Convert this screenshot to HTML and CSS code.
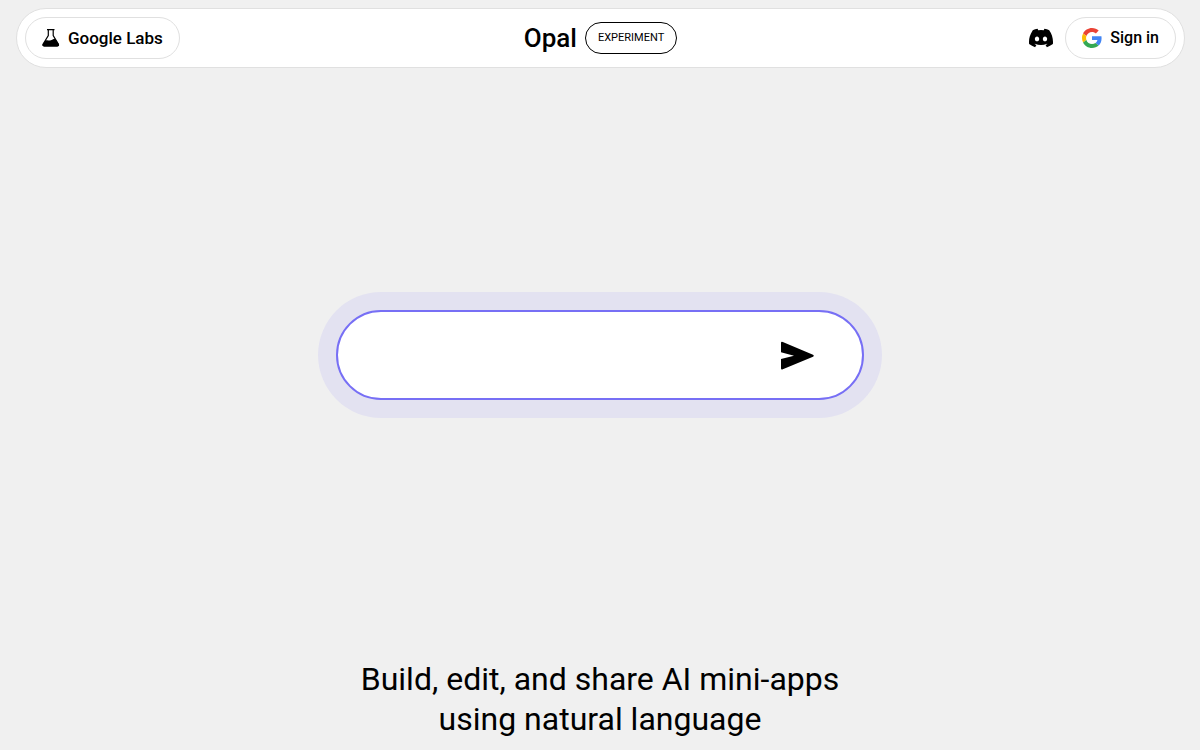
FILE: index.html
```html
<!DOCTYPE html>
<html lang="en">
<head>
<meta charset="UTF-8">
<meta name="viewport" content="width=device-width, initial-scale=1.0">
<title>Opal</title>
<link rel="stylesheet" href="styles.css">
</head>
<body>
  <header class="header">
    <a class="pill labs" href="#labs">
      <svg width="18" height="18" viewBox="0 0 18 18" aria-hidden="true">
        <path d="M5 .7h7.500M6.300 1v5.600L1.200 15q-.9 2 1.200 2h12.700q2.100 0 1.200-2L11.200 6.600V1" fill="none" stroke="#000" stroke-width="1.200"/>
        <path d="M3.400 11.500c2.200-.9 3.600.4 5.300-.2 1.500-.5 2.600-1.800 4.600-1.600l3.400 5.300q.8 2.500-1.500 2.500H2.200Q-.1 17.500.7 15z"/>
      </svg>
      <span>Google Labs</span>
    </a>
    <div class="brand">
      <span class="brand-name">Opal</span>
      <span class="tag">EXPERIMENT</span>
    </div>
    <nav class="actions">
      <a class="discord" href="#discord" aria-label="Discord">
        <svg width="24" height="24" viewBox="0 0 24 24" aria-hidden="true">
          <path d="M20.317 4.370a19.800 19.800 0 0 0-4.885-1.515.074.074 0 0 0-.079.037c-.21.375-.444.864-.608 1.250a18.270 18.270 0 0 0-5.487 0 12.640 12.640 0 0 0-.617-1.250.077.077 0 0 0-.079-.037A19.740 19.740 0 0 0 3.677 4.370a.07.07 0 0 0-.032.027C.533 9.046-.32 13.580.099 18.058a.082.082 0 0 0 .031.056 19.900 19.900 0 0 0 5.993 3.030.078.078 0 0 0 .084-.028c.462-.63.874-1.295 1.226-1.994a.076.076 0 0 0-.041-.106 13.100 13.100 0 0 1-1.872-.892.077.077 0 0 1-.008-.128c.126-.094.252-.192.372-.291a.074.074 0 0 1 .078-.011c3.928 1.793 8.180 1.793 12.062 0a.074.074 0 0 1 .078.010c.12.099.246.198.373.292a.077.077 0 0 1-.006.128 12.300 12.300 0 0 1-1.873.891.077.077 0 0 0-.041.107c.36.698.772 1.363 1.225 1.993a.076.076 0 0 0 .084.029 19.840 19.840 0 0 0 6.002-3.030.077.077 0 0 0 .032-.055c.5-5.177-.838-9.674-3.549-13.660a.06.06 0 0 0-.031-.029zM8.020 15.331c-1.183 0-2.157-1.086-2.157-2.419s.956-2.419 2.157-2.419c1.210 0 2.176 1.095 2.157 2.419 0 1.333-.956 2.419-2.157 2.419zm7.975 0c-1.183 0-2.157-1.086-2.157-2.419s.955-2.419 2.157-2.419c1.210 0 2.176 1.095 2.157 2.419 0 1.333-.946 2.419-2.157 2.419z"/>
        </svg>
      </a>
      <button class="pill sign-in" type="button">
        <svg width="20" height="20" viewBox="0 0 48 48" aria-hidden="true">
          <path fill="#ea4335" d="M24 9.500c3.540 0 6.710 1.220 9.210 3.600l6.850-6.850C35.900 2.380 30.470 0 24 0 14.620 0 6.510 5.380 2.560 13.220l7.980 6.190C12.430 13.720 17.740 9.500 24 9.500z"/>
          <path fill="#4285f4" d="M46.980 24.550c0-1.570-.15-3.090-.38-4.550H24v9.020h12.940c-.58 2.960-2.260 5.480-4.780 7.180l7.730 6c4.510-4.180 7.090-10.360 7.090-17.650z"/>
          <path fill="#fbbc05" d="M10.530 28.590A14.500 14.500 0 0 1 9.770 24c0-1.600.27-3.140.76-4.590l-7.980-6.190A23.900 23.900 0 0 0 0 24c0 3.880.92 7.540 2.560 10.780z"/>
          <path fill="#34a853" d="M24 48c6.480 0 11.930-2.130 15.890-5.810l-7.730-6c-2.150 1.450-4.920 2.300-8.160 2.300-6.260 0-11.570-4.220-13.470-9.910l-7.980 6.190C6.510 42.620 14.620 48 24 48z"/>
        </svg>
        <span>Sign in</span>
      </button>
    </nav>
  </header>

  <main class="main">
    <section class="stage">
      <form class="prompt">
        <div class="prompt-box">
          <input class="prompt-input" type="text" aria-label="Describe your app">
          <button class="send" type="button" aria-label="Send">
            <svg width="34" height="30" viewBox="0 0 34 30" aria-hidden="true">
              <path d="M1 3Q1 1.200 2.800 1.900L33 14.700q1.500 1 0 2L2.800 29.200Q1 30 1 28.200V19L14 15.700 1 12.300z"/>
            </svg>
          </button>
        </div>
      </form>
    </section>
    <h1 class="headline">Build, edit, and share AI mini-apps<br>using natural language</h1>
  </main>
</body>
</html>
```

FILE: styles.css
```css
* {
  box-sizing: border-box;
}
body {
  display: flex;
  flex-direction: column;
  min-height: 100vh;
  margin: 0;
  background: #f0f0f0;
  color: #000;
  font-family: "Google Sans", Roboto, Arial, sans-serif;
}
a {
  color: inherit;
  text-decoration: none;
}
button {
  font-family: inherit;
  cursor: pointer;
}
svg {
  display: block;
}

/* Header */
.header {
  display: grid;
  grid-template-columns: 1fr auto 1fr;
  align-items: center;
  margin: 8px 15px 0 16px;
  padding: 8px;
  background: #fff;
  border: 1px solid #e0e0e0;
  border-radius: 30px;
}
.pill {
  display: flex;
  align-items: center;
  gap: 8px;
  height: 42px;
  padding: 0 16px;
  background: #fff;
  border: 1px solid #e0e0e0;
  border-radius: 21px;
  color: #000;
  font-size: 16px;
  font-weight: 500;
  line-height: 24px;
}
.labs {
  justify-self: start;
  font-size: 17px;
}
.brand {
  display: flex;
  align-items: center;
  gap: 8px;
}
.brand-name {
  font-size: 26px;
  font-weight: 500;
  line-height: 32px;
}
.tag {
  padding: 0 12px;
  border: 1px solid #000;
  border-radius: 16px;
  font-size: 11px;
  line-height: 30px;
}
.actions {
  display: flex;
  align-items: center;
  justify-content: flex-end;
  gap: 12px;
}

/* Prompt */
.main {
  display: flex;
  flex: 1;
  flex-direction: column;
}
.stage {
  display: flex;
  flex: 1;
  align-items: center;
  justify-content: center;
}
.prompt {
  width: 47%;
  padding: 18px;
  background: #e3e2f1;
  border-radius: 63px;
}
.prompt-box {
  display: flex;
  align-items: center;
  height: 90px;
  padding: 0 48px;
  background: #fff;
  border: 2px solid #776ff5;
  border-radius: 45px;
}
.prompt-input {
  flex: 1;
  min-width: 0;
  height: 48px;
  padding: 0;
  background: none;
  border: 0;
  outline: 0;
  font-family: inherit;
  font-size: 24px;
}
.send {
  padding: 0;
  background: none;
  border: 0;
}
.headline {
  margin: 0;
  padding: 17px 16px 11px;
  font-size: 32px;
  font-weight: 400;
  line-height: 40px;
  text-align: center;
}
```
